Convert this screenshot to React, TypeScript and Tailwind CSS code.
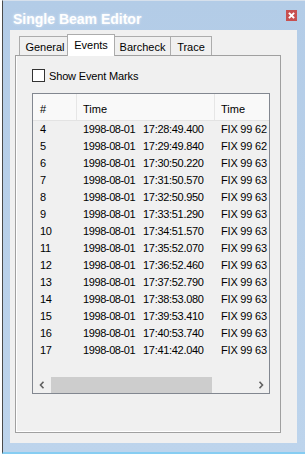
import React from "react";

const rows: [string, string, string][] = [
  ["4", "17:28:49.400", "FIX 99 62"],
  ["5", "17:29:49.840", "FIX 99 62"],
  ["6", "17:30:50.220", "FIX 99 63"],
  ["7", "17:31:50.570", "FIX 99 63"],
  ["8", "17:32:50.950", "FIX 99 63"],
  ["9", "17:33:51.290", "FIX 99 63"],
  ["10", "17:34:51.570", "FIX 99 63"],
  ["11", "17:35:52.070", "FIX 99 63"],
  ["12", "17:36:52.460", "FIX 99 63"],
  ["13", "17:37:52.790", "FIX 99 63"],
  ["14", "17:38:53.080", "FIX 99 63"],
  ["15", "17:39:53.410", "FIX 99 63"],
  ["16", "17:40:53.740", "FIX 99 63"],
  ["17", "17:41:42.040", "FIX 99 63"],
];

export default function App() {
  return (
    <div className="w-[306px] h-[456px] bg-white overflow-hidden font-['Liberation_Sans',Arial,sans-serif] text-[11px] text-black">
      <div className="ml-[2px] w-[303px] h-[454px] border-l border-l-[#4a4a4a] border-t border-t-[#d6e0ec] border-b-2 border-b-[#86cdf2] bg-gradient-to-b from-[#b3cce7] to-[#bdd4ec] flex flex-col">
        {/* title bar */}
        <div className="h-[29px] flex items-start justify-between pl-[10px] pr-[8px]">
          <div
            className="pt-[10px] text-[14px] leading-[16px] font-bold text-white"
            style={{ textShadow: "0 0 3px rgba(255,255,255,0.6)" }}
          >
            Single Beam Editor
          </div>
          <div className="mt-[9px] w-[11px] h-[11px] bg-[#c75050] flex items-center justify-center">
            <svg width="11" height="11" viewBox="0 0 11 11">
              <path d="M3.5 3.5 L7.5 7.5 M7.5 3.5 L3.5 7.5" stroke="white" strokeWidth="1.8" strokeLinecap="square" />
            </svg>
          </div>
        </div>

        {/* client area */}
        <div className="ml-[7px] w-[287px] h-[413px] bg-[#f0f0f0] pt-[4px] pl-[5px]">
          {/* tab control */}
          <div className="w-[266px] flex flex-col">
            <div className="h-[22px] flex items-end pl-[4px] -mb-px relative z-10">
              <div className="h-[19px] w-[48px] mb-px border border-b-0 border-r-0 border-[#acacac] bg-[#f0f0f0] text-center pt-[2px] leading-[17px] pl-[3px]">
                General
              </div>
              <div className="h-[22px] w-[48px] border border-b-0 border-[#acacac] bg-white text-center pt-[2px] leading-[17px]">
                Events
              </div>
              <div className="h-[19px] w-[56px] mb-px border border-b-0 border-l-0 border-[#acacac] bg-[#f0f0f0] text-center pt-[2px] leading-[17px]">
                Barcheck
              </div>
              <div className="h-[19px] w-[41px] mb-px border border-b-0 border-l-0 border-[#acacac] bg-[#f0f0f0] text-center pt-[2px] leading-[17px]">
                Trace
              </div>
            </div>
            <div className="h-[378px] border border-[#a0a0a0] bg-[#f0f0f0]">
              <div className="h-full border-l border-b border-white">
                {/* checkbox */}
                <div className="pt-[13px] pl-[15px] flex items-center h-[13px] box-content">
                  <div className="w-[13px] h-[13px] border border-[#333333] bg-white" />
                  <span className="ml-[4px] mt-[2px] leading-[17px] tracking-[-0.15px]">Show Event Marks</span>
                </div>
                {/* list view */}
                <div className="mt-[11px] ml-[15px] w-[238px] h-[301px] border border-[#828790] bg-[#f0f0f0] flex flex-col overflow-hidden">
                  <div className="h-[27px] shrink-0 flex border-b border-[#e3e3e3] bg-[#f9f9f9] leading-[17px]">
                    <div className="w-[43px] pl-[7px] pt-[7px]">#</div>
                    <div className="w-[138px] border-l border-[#e6e6e6] pl-[6px] pt-[7px]">Time</div>
                    <div className="flex-1 border-l border-[#e6e6e6] pl-[6px] pt-[7px]">Time</div>
                  </div>
                  {rows.map(([n, t, f]) => (
                    <div key={n} className="h-[17px] shrink-0 flex leading-[17px] whitespace-nowrap">
                      <div className="w-[43px] pl-[7px] tracking-[-0.3px]">{n}</div>
                      <div className="w-[138px] pl-[7px] flex">
                        <span className="w-[60px] tracking-[-0.4px]">1998-08-01</span>
                        <span className="tracking-[-0.3px]">{t}</span>
                      </div>
                      <div className="flex-1 pl-[7px] overflow-hidden tracking-[-0.2px]">{f}</div>
                    </div>
                  ))}
                  <div className="flex-1" />
                  <div className="h-[16px] shrink-0 flex bg-[#f0f0f0]">
                    <div className="w-[17px] flex items-center justify-center">
                      <svg width="6" height="8" viewBox="0 0 6 8">
                        <path d="M4.5 0.8 L1.5 4 L4.5 7.2" stroke="#606060" strokeWidth="1.6" fill="none" />
                      </svg>
                    </div>
                    <div className="flex-1 pl-[1px]">
                      <div className="w-[161px] h-[16px] bg-[#cdcdcd]" />
                    </div>
                    <div className="w-[17px] flex items-center justify-center">
                      <svg width="6" height="8" viewBox="0 0 6 8">
                        <path d="M1.5 0.8 L4.5 4 L1.5 7.2" stroke="#606060" strokeWidth="1.6" fill="none" />
                      </svg>
                    </div>
                  </div>
                </div>
              </div>
            </div>
          </div>
        </div>
      </div>
    </div>
  );
}
